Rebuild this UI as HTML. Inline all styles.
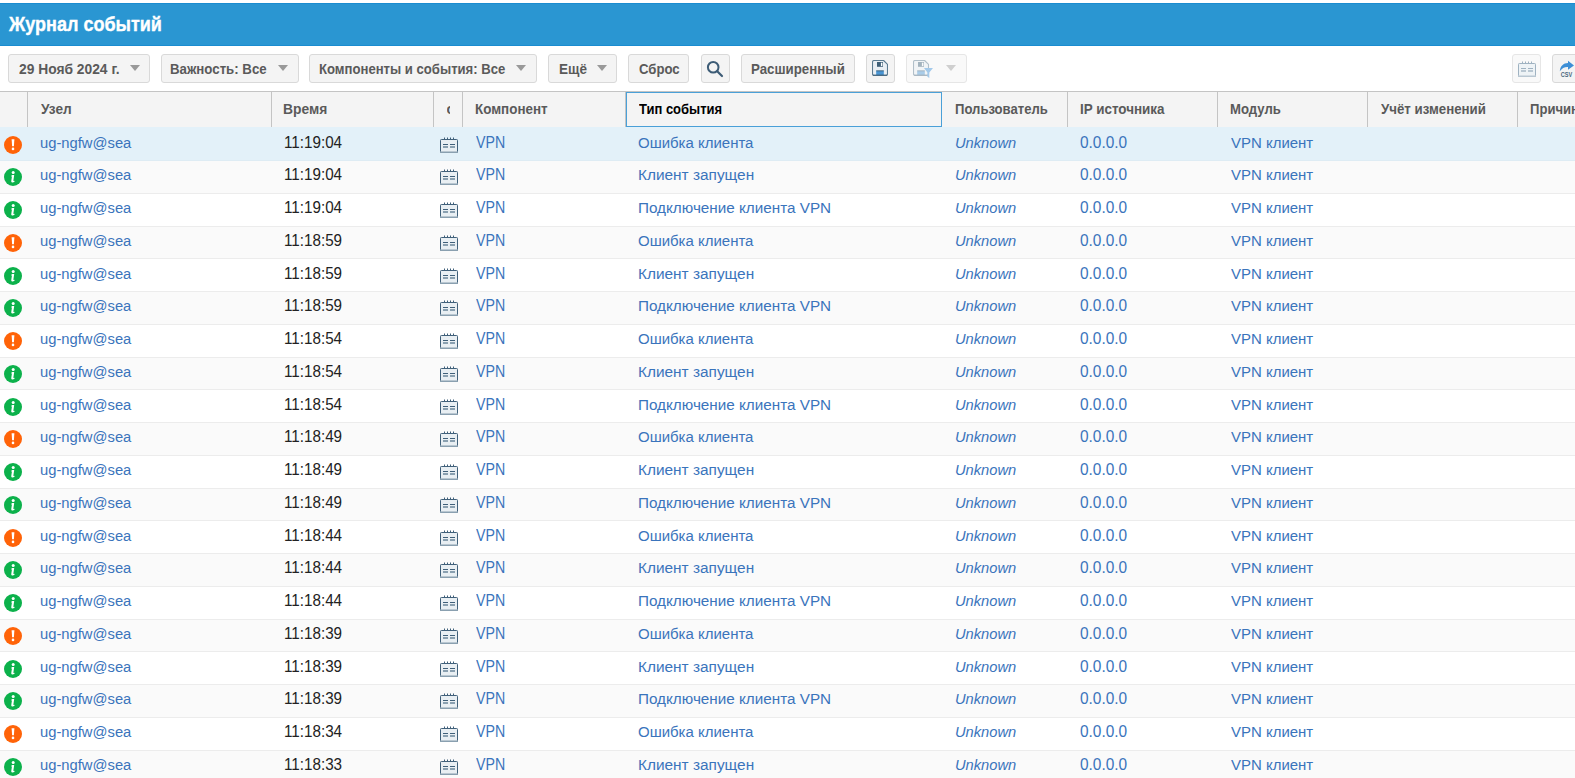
<!DOCTYPE html>
<html><head><meta charset="utf-8"><title>Журнал событий</title><style>
*{box-sizing:border-box;margin:0;padding:0}
html,body{width:1575px;height:778px;overflow:hidden;background:#fff;font-family:"Liberation Sans", sans-serif;position:relative}
.a{position:absolute;white-space:nowrap}
.btn{position:absolute;top:54px;height:29px;border:1px solid #d9d9d9;border-radius:3px;background:#f4f4f4}
.btn.dis{background:#f9f9f9;border-color:#e6e6e6}
.bt{position:absolute;font-weight:bold;font-size:14px;color:#5a5a5a;line-height:15px;top:61.7px;white-space:nowrap;transform-origin:0 0}
.car{position:absolute;width:0;height:0;border-left:5px solid transparent;border-right:5px solid transparent;border-top:6px solid #999;top:65px}
.hd{position:absolute;font-weight:bold;font-size:14px;color:#5a5a5a;line-height:15px;top:101.7px;white-space:nowrap;transform-origin:0 0}
.sep{position:absolute;top:92px;width:1px;height:35px;background:#c4c4c4}
.row{position:absolute;left:0;width:1575px}
.t{position:absolute;font-size:16px;line-height:17px;white-space:nowrap;color:#3a74bc;transform-origin:0 0}
.tm{color:#222}
.it{font-style:italic}
.ic{position:absolute;left:4px;width:18px;height:18px;border-radius:50%}
.cal{position:absolute;left:440px}
</style></head>
<body>
<div class="a" style="left:0;top:3px;width:1575px;height:43px;background:#2a96d2;border-top:1px solid #1a8cd0;border-bottom:1px solid #1a8cd0"></div>
<div class="a" style="left:9px;top:14px;font-size:19.5px;line-height:21px;font-weight:bold;color:#fff;-webkit-text-stroke:0.35px #fff;transform:scaleX(0.9238);transform-origin:0 0">Журнал событий</div>
<div class="btn" style="left:8px;width:142px"></div>
<div class="bt" style="left:19px;transform:scaleX(0.9861)">29 Нояб 2024 г.</div>
<div class="car" style="left:130px"></div>
<div class="btn" style="left:161px;width:138px"></div>
<div class="bt" style="left:170.4px;transform:scaleX(0.9465)">Важность: Все</div>
<div class="car" style="left:278px"></div>
<div class="btn" style="left:309px;width:228px"></div>
<div class="bt" style="left:319.4px;transform:scaleX(0.9364)">Компоненты и события: Все</div>
<div class="car" style="left:516px"></div>
<div class="btn" style="left:548px;width:69px"></div>
<div class="bt" style="left:559px;transform:scaleX(0.9643)">Ещё</div>
<div class="car" style="left:597px"></div>
<div class="btn" style="left:628px;width:61px"></div>
<div class="bt" style="left:638.5px;transform:scaleX(0.9381)">Сброс</div>
<div class="btn" style="left:741px;width:114px"></div>
<div class="bt" style="left:750.6px;transform:scaleX(0.9495)">Расширенный</div>
<div class="btn" style="left:701px;width:29px"></div>
<svg class="a" style="left:701px;top:54px" width="29" height="29" viewBox="0 0 29 29"><circle cx="12.2" cy="13.2" r="5.3" fill="none" stroke="#3d5c76" stroke-width="2"/><line x1="16.2" y1="17.2" x2="21" y2="22" stroke="#3d5c76" stroke-width="2.2" stroke-linecap="round"/></svg>
<div class="btn" style="left:866px;width:29px"></div>
<svg class="a" style="left:872px;top:60px" width="16" height="16" viewBox="0 0 16 16"><g opacity="1"><path d="M2 0.5 H11.6 L15.5 4.4 V14 Q15.5 15.5 14 15.5 H2 Q0.5 15.5 0.5 14 V2 Q0.5 0.5 2 0.5 Z" fill="#e9eff4" stroke="#5b7b91" stroke-width="1.1" stroke-linejoin="round"/><rect x="5" y="2" width="6" height="4.8" fill="#3d5f78"/><rect x="8.9" y="2.7" width="1.5" height="3.4" fill="#fff"/><rect x="4.2" y="10.8" width="7.6" height="4.3" fill="#4a96d4"/><rect x="4.2" y="10.4" width="7.6" height="0.9" fill="#3d5f78"/><rect x="1" y="14.6" width="14" height="1" fill="#3f6079"/></g></svg>
<div class="btn dis" style="left:906px;width:61px"></div>
<svg class="a" style="left:913px;top:60px" width="22" height="20" viewBox="0 0 22 20"><g opacity="0.45"><path d="M2 0.5 H11.6 L15.5 4.4 V14 Q15.5 15.5 14 15.5 H2 Q0.5 15.5 0.5 14 V2 Q0.5 0.5 2 0.5 Z" fill="#e9eff4" stroke="#5b7b91" stroke-width="1.1" stroke-linejoin="round"/><rect x="5" y="2" width="6" height="4.8" fill="#3d5f78"/><rect x="8.9" y="2.7" width="1.5" height="3.4" fill="#fff"/><rect x="4.2" y="10.8" width="7.6" height="4.3" fill="#4a96d4"/><rect x="4.2" y="10.4" width="7.6" height="0.9" fill="#3d5f78"/><rect x="1" y="14.6" width="14" height="1" fill="#3f6079"/></g><path d="M11 8 H20 L16.3 12.6 V18 L14.4 16.8 V12.6 Z" fill="#a3c9ea"/></svg>
<div class="car" style="left:946px;border-top-color:#cfcfcf"></div>
<div class="btn dis" style="left:1512px;width:29px"></div>
<svg class="a" style="left:1518px;top:61px" width="18" height="16" viewBox="0 0 18 16" opacity="1"><rect x="0.5" y="2.5" width="17" height="13" rx="0.8" fill="#eef3f6" stroke="#9fb2c1" stroke-width="1"/><rect x="0" y="14.5" width="18" height="1.5" fill="#b9c7d2"/><rect x="4" y="0.5" width="1" height="2" fill="#9fb2c1"/><rect x="7" y="0.5" width="1" height="2" fill="#9fb2c1"/><rect x="10" y="0.5" width="1" height="2" fill="#9fb2c1"/><rect x="13" y="0.5" width="1" height="2" fill="#9fb2c1"/><rect x="3" y="7" width="5" height="1" fill="#9fb2c1"/><rect x="10" y="7" width="5" height="1" fill="#9fb2c1"/><rect x="3" y="9" width="5" height="2" fill="#b9c7d2"/><rect x="10" y="9" width="5" height="2" fill="#b9c7d2"/></svg>
<div class="btn" style="left:1552px;width:40px"></div>
<svg class="a" style="left:1552px;top:54px" width="23" height="29" viewBox="0 0 23 29"><path d="M7.8 17.3 C8.2 12 11.5 9 16 9 V6.8 L22 11.4 L16 15.8 V13 C12.5 12.8 10 14.2 7.8 17.3 Z" fill="#3d8fd6"/><text x="0" y="0" transform="translate(8.8 22.9) scale(0.82 1)" font-family="Liberation Sans" font-weight="bold" font-size="6.8" fill="#4a687e">CSV</text></svg>
<div class="a" style="left:0;top:91px;width:1575px;height:36px;background:#f4f4f4;border-top:1px solid #c4c4c4"></div>
<div class="sep" style="left:27px"></div>
<div class="sep" style="left:271px"></div>
<div class="sep" style="left:433px"></div>
<div class="sep" style="left:462px"></div>
<div class="sep" style="left:625px"></div>
<div class="sep" style="left:941px"></div>
<div class="sep" style="left:1067px"></div>
<div class="sep" style="left:1217px"></div>
<div class="sep" style="left:1367px"></div>
<div class="sep" style="left:1517px"></div>
<div class="a" style="left:626px;top:92px;width:316px;height:35px;border:1px solid #4aa0d8"></div>
<div class="hd" style="left:41px;transform:scaleX(0.9742)">Узел</div>
<div class="hd" style="left:283.2px;transform:scaleX(0.9884)">Время</div>
<div class="a" style="left:447px;top:92px;width:3.4px;height:30px;overflow:hidden"><div class="hd" style="left:-0.6px;top:9.7px">о</div></div>
<div class="hd" style="left:475.3px;transform:scaleX(0.9573)">Компонент</div>
<div class="hd" style="left:639px;transform:scaleX(0.9281);color:#000">Тип события</div>
<div class="hd" style="left:955.3px;transform:scaleX(0.9347)">Пользователь</div>
<div class="hd" style="left:1080.3px;transform:scaleX(0.9586)">IP источника</div>
<div class="hd" style="left:1230.3px;transform:scaleX(0.9377)">Модуль</div>
<div class="hd" style="left:1381px;transform:scaleX(0.9482)">Учёт изменений</div>
<div class="hd" style="left:1530.3px;transform:scaleX(0.9347)">Причина</div>
<div class="row" style="top:127px;height:34px;background:#e3f1f9;border-bottom:1px solid #deecf4"></div>
<svg class="a" style="left:4px;top:136px" width="18" height="18" viewBox="0 0 18 18"><circle cx="9" cy="9" r="9" fill="#ff6308"/><path d="M7.6 3.2 H10.4 L9.9 10.2 H8.1 Z" fill="#fff"/><circle cx="9" cy="12.9" r="1.3" fill="#fff"/></svg>
<div class="t" style="left:40px;top:134px;font-size:15.5px;transform:scaleX(0.9526)">ug-ngfw@sea</div>
<div class="t tm" style="left:284.3px;top:134px;transform:scaleX(0.95)">11:19:04</div>
<svg class="a" style="left:440px;top:137px" width="18" height="16" viewBox="0 0 18 16" opacity="1"><rect x="0.5" y="2.5" width="17" height="13" rx="0.8" fill="#e9eff3" stroke="#40607a" stroke-width="1"/><rect x="0" y="14.5" width="18" height="1.5" fill="#8aa0b0"/><rect x="4" y="0.5" width="1" height="2" fill="#40607a"/><rect x="7" y="0.5" width="1" height="2" fill="#40607a"/><rect x="10" y="0.5" width="1" height="2" fill="#40607a"/><rect x="13" y="0.5" width="1" height="2" fill="#40607a"/><rect x="3" y="7" width="5" height="1" fill="#40607a"/><rect x="10" y="7" width="5" height="1" fill="#40607a"/><rect x="3" y="9" width="5" height="2" fill="#8aa0b0"/><rect x="10" y="9" width="5" height="2" fill="#8aa0b0"/></svg>
<div class="t" style="left:475.7px;top:134px;transform:scaleX(0.8875)">VPN</div>
<div class="t" style="left:638px;top:134px;font-size:15.5px;transform:scaleX(0.9664)">Ошибка клиента</div>
<div class="t it" style="left:955px;top:134px;font-size:15.5px;transform:scaleX(0.9476)">Unknown</div>
<div class="t" style="left:1080px;top:134px;transform:scaleX(0.9638)">0.0.0.0</div>
<div class="t" style="left:1231px;top:134px;font-size:15.5px;transform:scaleX(0.9659)">VPN клиент</div>
<div class="row" style="top:161px;height:33px;background:#fafafa;border-bottom:1px solid #ececec"></div>
<svg class="a" style="left:4px;top:168px" width="18" height="18" viewBox="0 0 18 18"><circle cx="9" cy="9" r="9" fill="#0cb14b"/><circle cx="9.2" cy="4.4" r="1.5" fill="#fff"/><path d="M7.7 7 H10.2 L9.4 12.6 C9.3 13.2 9.8 13.3 10.6 12.7 L10.8 13.3 C9.8 14.3 8.6 14.7 7.9 14.4 C7.3 14.1 7.2 13.5 7.3 12.8 L7.9 8.7 H7.4 Z" fill="#fff"/></svg>
<div class="t" style="left:40px;top:166px;font-size:15.5px;transform:scaleX(0.9526)">ug-ngfw@sea</div>
<div class="t tm" style="left:284.3px;top:166px;transform:scaleX(0.95)">11:19:04</div>
<svg class="a" style="left:440px;top:169px" width="18" height="16" viewBox="0 0 18 16" opacity="1"><rect x="0.5" y="2.5" width="17" height="13" rx="0.8" fill="#e9eff3" stroke="#40607a" stroke-width="1"/><rect x="0" y="14.5" width="18" height="1.5" fill="#8aa0b0"/><rect x="4" y="0.5" width="1" height="2" fill="#40607a"/><rect x="7" y="0.5" width="1" height="2" fill="#40607a"/><rect x="10" y="0.5" width="1" height="2" fill="#40607a"/><rect x="13" y="0.5" width="1" height="2" fill="#40607a"/><rect x="3" y="7" width="5" height="1" fill="#40607a"/><rect x="10" y="7" width="5" height="1" fill="#40607a"/><rect x="3" y="9" width="5" height="2" fill="#8aa0b0"/><rect x="10" y="9" width="5" height="2" fill="#8aa0b0"/></svg>
<div class="t" style="left:475.7px;top:166px;transform:scaleX(0.8875)">VPN</div>
<div class="t" style="left:638px;top:166px;font-size:15.5px;transform:scaleX(0.993)">Клиент запущен</div>
<div class="t it" style="left:955px;top:166px;font-size:15.5px;transform:scaleX(0.9476)">Unknown</div>
<div class="t" style="left:1080px;top:166px;transform:scaleX(0.9638)">0.0.0.0</div>
<div class="t" style="left:1231px;top:166px;font-size:15.5px;transform:scaleX(0.9659)">VPN клиент</div>
<div class="row" style="top:194px;height:33px;background:#ffffff;border-bottom:1px solid #ececec"></div>
<svg class="a" style="left:4px;top:201px" width="18" height="18" viewBox="0 0 18 18"><circle cx="9" cy="9" r="9" fill="#0cb14b"/><circle cx="9.2" cy="4.4" r="1.5" fill="#fff"/><path d="M7.7 7 H10.2 L9.4 12.6 C9.3 13.2 9.8 13.3 10.6 12.7 L10.8 13.3 C9.8 14.3 8.6 14.7 7.9 14.4 C7.3 14.1 7.2 13.5 7.3 12.8 L7.9 8.7 H7.4 Z" fill="#fff"/></svg>
<div class="t" style="left:40px;top:199px;font-size:15.5px;transform:scaleX(0.9526)">ug-ngfw@sea</div>
<div class="t tm" style="left:284.3px;top:199px;transform:scaleX(0.95)">11:19:04</div>
<svg class="a" style="left:440px;top:202px" width="18" height="16" viewBox="0 0 18 16" opacity="1"><rect x="0.5" y="2.5" width="17" height="13" rx="0.8" fill="#e9eff3" stroke="#40607a" stroke-width="1"/><rect x="0" y="14.5" width="18" height="1.5" fill="#8aa0b0"/><rect x="4" y="0.5" width="1" height="2" fill="#40607a"/><rect x="7" y="0.5" width="1" height="2" fill="#40607a"/><rect x="10" y="0.5" width="1" height="2" fill="#40607a"/><rect x="13" y="0.5" width="1" height="2" fill="#40607a"/><rect x="3" y="7" width="5" height="1" fill="#40607a"/><rect x="10" y="7" width="5" height="1" fill="#40607a"/><rect x="3" y="9" width="5" height="2" fill="#8aa0b0"/><rect x="10" y="9" width="5" height="2" fill="#8aa0b0"/></svg>
<div class="t" style="left:475.7px;top:199px;transform:scaleX(0.8875)">VPN</div>
<div class="t" style="left:638px;top:199px;font-size:15.5px;transform:scaleX(0.9845)">Подключение клиента VPN</div>
<div class="t it" style="left:955px;top:199px;font-size:15.5px;transform:scaleX(0.9476)">Unknown</div>
<div class="t" style="left:1080px;top:199px;transform:scaleX(0.9638)">0.0.0.0</div>
<div class="t" style="left:1231px;top:199px;font-size:15.5px;transform:scaleX(0.9659)">VPN клиент</div>
<div class="row" style="top:227px;height:32px;background:#fafafa;border-bottom:1px solid #ececec"></div>
<svg class="a" style="left:4px;top:234px" width="18" height="18" viewBox="0 0 18 18"><circle cx="9" cy="9" r="9" fill="#ff6308"/><path d="M7.6 3.2 H10.4 L9.9 10.2 H8.1 Z" fill="#fff"/><circle cx="9" cy="12.9" r="1.3" fill="#fff"/></svg>
<div class="t" style="left:40px;top:232px;font-size:15.5px;transform:scaleX(0.9526)">ug-ngfw@sea</div>
<div class="t tm" style="left:284.3px;top:232px;transform:scaleX(0.95)">11:18:59</div>
<svg class="a" style="left:440px;top:235px" width="18" height="16" viewBox="0 0 18 16" opacity="1"><rect x="0.5" y="2.5" width="17" height="13" rx="0.8" fill="#e9eff3" stroke="#40607a" stroke-width="1"/><rect x="0" y="14.5" width="18" height="1.5" fill="#8aa0b0"/><rect x="4" y="0.5" width="1" height="2" fill="#40607a"/><rect x="7" y="0.5" width="1" height="2" fill="#40607a"/><rect x="10" y="0.5" width="1" height="2" fill="#40607a"/><rect x="13" y="0.5" width="1" height="2" fill="#40607a"/><rect x="3" y="7" width="5" height="1" fill="#40607a"/><rect x="10" y="7" width="5" height="1" fill="#40607a"/><rect x="3" y="9" width="5" height="2" fill="#8aa0b0"/><rect x="10" y="9" width="5" height="2" fill="#8aa0b0"/></svg>
<div class="t" style="left:475.7px;top:232px;transform:scaleX(0.8875)">VPN</div>
<div class="t" style="left:638px;top:232px;font-size:15.5px;transform:scaleX(0.9664)">Ошибка клиента</div>
<div class="t it" style="left:955px;top:232px;font-size:15.5px;transform:scaleX(0.9476)">Unknown</div>
<div class="t" style="left:1080px;top:232px;transform:scaleX(0.9638)">0.0.0.0</div>
<div class="t" style="left:1231px;top:232px;font-size:15.5px;transform:scaleX(0.9659)">VPN клиент</div>
<div class="row" style="top:259px;height:33px;background:#ffffff;border-bottom:1px solid #ececec"></div>
<svg class="a" style="left:4px;top:267px" width="18" height="18" viewBox="0 0 18 18"><circle cx="9" cy="9" r="9" fill="#0cb14b"/><circle cx="9.2" cy="4.4" r="1.5" fill="#fff"/><path d="M7.7 7 H10.2 L9.4 12.6 C9.3 13.2 9.8 13.3 10.6 12.7 L10.8 13.3 C9.8 14.3 8.6 14.7 7.9 14.4 C7.3 14.1 7.2 13.5 7.3 12.8 L7.9 8.7 H7.4 Z" fill="#fff"/></svg>
<div class="t" style="left:40px;top:265px;font-size:15.5px;transform:scaleX(0.9526)">ug-ngfw@sea</div>
<div class="t tm" style="left:284.3px;top:265px;transform:scaleX(0.95)">11:18:59</div>
<svg class="a" style="left:440px;top:268px" width="18" height="16" viewBox="0 0 18 16" opacity="1"><rect x="0.5" y="2.5" width="17" height="13" rx="0.8" fill="#e9eff3" stroke="#40607a" stroke-width="1"/><rect x="0" y="14.5" width="18" height="1.5" fill="#8aa0b0"/><rect x="4" y="0.5" width="1" height="2" fill="#40607a"/><rect x="7" y="0.5" width="1" height="2" fill="#40607a"/><rect x="10" y="0.5" width="1" height="2" fill="#40607a"/><rect x="13" y="0.5" width="1" height="2" fill="#40607a"/><rect x="3" y="7" width="5" height="1" fill="#40607a"/><rect x="10" y="7" width="5" height="1" fill="#40607a"/><rect x="3" y="9" width="5" height="2" fill="#8aa0b0"/><rect x="10" y="9" width="5" height="2" fill="#8aa0b0"/></svg>
<div class="t" style="left:475.7px;top:265px;transform:scaleX(0.8875)">VPN</div>
<div class="t" style="left:638px;top:265px;font-size:15.5px;transform:scaleX(0.993)">Клиент запущен</div>
<div class="t it" style="left:955px;top:265px;font-size:15.5px;transform:scaleX(0.9476)">Unknown</div>
<div class="t" style="left:1080px;top:265px;transform:scaleX(0.9638)">0.0.0.0</div>
<div class="t" style="left:1231px;top:265px;font-size:15.5px;transform:scaleX(0.9659)">VPN клиент</div>
<div class="row" style="top:292px;height:33px;background:#fafafa;border-bottom:1px solid #ececec"></div>
<svg class="a" style="left:4px;top:299px" width="18" height="18" viewBox="0 0 18 18"><circle cx="9" cy="9" r="9" fill="#0cb14b"/><circle cx="9.2" cy="4.4" r="1.5" fill="#fff"/><path d="M7.7 7 H10.2 L9.4 12.6 C9.3 13.2 9.8 13.3 10.6 12.7 L10.8 13.3 C9.8 14.3 8.6 14.7 7.9 14.4 C7.3 14.1 7.2 13.5 7.3 12.8 L7.9 8.7 H7.4 Z" fill="#fff"/></svg>
<div class="t" style="left:40px;top:297px;font-size:15.5px;transform:scaleX(0.9526)">ug-ngfw@sea</div>
<div class="t tm" style="left:284.3px;top:297px;transform:scaleX(0.95)">11:18:59</div>
<svg class="a" style="left:440px;top:300px" width="18" height="16" viewBox="0 0 18 16" opacity="1"><rect x="0.5" y="2.5" width="17" height="13" rx="0.8" fill="#e9eff3" stroke="#40607a" stroke-width="1"/><rect x="0" y="14.5" width="18" height="1.5" fill="#8aa0b0"/><rect x="4" y="0.5" width="1" height="2" fill="#40607a"/><rect x="7" y="0.5" width="1" height="2" fill="#40607a"/><rect x="10" y="0.5" width="1" height="2" fill="#40607a"/><rect x="13" y="0.5" width="1" height="2" fill="#40607a"/><rect x="3" y="7" width="5" height="1" fill="#40607a"/><rect x="10" y="7" width="5" height="1" fill="#40607a"/><rect x="3" y="9" width="5" height="2" fill="#8aa0b0"/><rect x="10" y="9" width="5" height="2" fill="#8aa0b0"/></svg>
<div class="t" style="left:475.7px;top:297px;transform:scaleX(0.8875)">VPN</div>
<div class="t" style="left:638px;top:297px;font-size:15.5px;transform:scaleX(0.9845)">Подключение клиента VPN</div>
<div class="t it" style="left:955px;top:297px;font-size:15.5px;transform:scaleX(0.9476)">Unknown</div>
<div class="t" style="left:1080px;top:297px;transform:scaleX(0.9638)">0.0.0.0</div>
<div class="t" style="left:1231px;top:297px;font-size:15.5px;transform:scaleX(0.9659)">VPN клиент</div>
<div class="row" style="top:325px;height:33px;background:#ffffff;border-bottom:1px solid #ececec"></div>
<svg class="a" style="left:4px;top:332px" width="18" height="18" viewBox="0 0 18 18"><circle cx="9" cy="9" r="9" fill="#ff6308"/><path d="M7.6 3.2 H10.4 L9.9 10.2 H8.1 Z" fill="#fff"/><circle cx="9" cy="12.9" r="1.3" fill="#fff"/></svg>
<div class="t" style="left:40px;top:330px;font-size:15.5px;transform:scaleX(0.9526)">ug-ngfw@sea</div>
<div class="t tm" style="left:284.3px;top:330px;transform:scaleX(0.95)">11:18:54</div>
<svg class="a" style="left:440px;top:333px" width="18" height="16" viewBox="0 0 18 16" opacity="1"><rect x="0.5" y="2.5" width="17" height="13" rx="0.8" fill="#e9eff3" stroke="#40607a" stroke-width="1"/><rect x="0" y="14.5" width="18" height="1.5" fill="#8aa0b0"/><rect x="4" y="0.5" width="1" height="2" fill="#40607a"/><rect x="7" y="0.5" width="1" height="2" fill="#40607a"/><rect x="10" y="0.5" width="1" height="2" fill="#40607a"/><rect x="13" y="0.5" width="1" height="2" fill="#40607a"/><rect x="3" y="7" width="5" height="1" fill="#40607a"/><rect x="10" y="7" width="5" height="1" fill="#40607a"/><rect x="3" y="9" width="5" height="2" fill="#8aa0b0"/><rect x="10" y="9" width="5" height="2" fill="#8aa0b0"/></svg>
<div class="t" style="left:475.7px;top:330px;transform:scaleX(0.8875)">VPN</div>
<div class="t" style="left:638px;top:330px;font-size:15.5px;transform:scaleX(0.9664)">Ошибка клиента</div>
<div class="t it" style="left:955px;top:330px;font-size:15.5px;transform:scaleX(0.9476)">Unknown</div>
<div class="t" style="left:1080px;top:330px;transform:scaleX(0.9638)">0.0.0.0</div>
<div class="t" style="left:1231px;top:330px;font-size:15.5px;transform:scaleX(0.9659)">VPN клиент</div>
<div class="row" style="top:358px;height:32px;background:#fafafa;border-bottom:1px solid #ececec"></div>
<svg class="a" style="left:4px;top:365px" width="18" height="18" viewBox="0 0 18 18"><circle cx="9" cy="9" r="9" fill="#0cb14b"/><circle cx="9.2" cy="4.4" r="1.5" fill="#fff"/><path d="M7.7 7 H10.2 L9.4 12.6 C9.3 13.2 9.8 13.3 10.6 12.7 L10.8 13.3 C9.8 14.3 8.6 14.7 7.9 14.4 C7.3 14.1 7.2 13.5 7.3 12.8 L7.9 8.7 H7.4 Z" fill="#fff"/></svg>
<div class="t" style="left:40px;top:363px;font-size:15.5px;transform:scaleX(0.9526)">ug-ngfw@sea</div>
<div class="t tm" style="left:284.3px;top:363px;transform:scaleX(0.95)">11:18:54</div>
<svg class="a" style="left:440px;top:366px" width="18" height="16" viewBox="0 0 18 16" opacity="1"><rect x="0.5" y="2.5" width="17" height="13" rx="0.8" fill="#e9eff3" stroke="#40607a" stroke-width="1"/><rect x="0" y="14.5" width="18" height="1.5" fill="#8aa0b0"/><rect x="4" y="0.5" width="1" height="2" fill="#40607a"/><rect x="7" y="0.5" width="1" height="2" fill="#40607a"/><rect x="10" y="0.5" width="1" height="2" fill="#40607a"/><rect x="13" y="0.5" width="1" height="2" fill="#40607a"/><rect x="3" y="7" width="5" height="1" fill="#40607a"/><rect x="10" y="7" width="5" height="1" fill="#40607a"/><rect x="3" y="9" width="5" height="2" fill="#8aa0b0"/><rect x="10" y="9" width="5" height="2" fill="#8aa0b0"/></svg>
<div class="t" style="left:475.7px;top:363px;transform:scaleX(0.8875)">VPN</div>
<div class="t" style="left:638px;top:363px;font-size:15.5px;transform:scaleX(0.993)">Клиент запущен</div>
<div class="t it" style="left:955px;top:363px;font-size:15.5px;transform:scaleX(0.9476)">Unknown</div>
<div class="t" style="left:1080px;top:363px;transform:scaleX(0.9638)">0.0.0.0</div>
<div class="t" style="left:1231px;top:363px;font-size:15.5px;transform:scaleX(0.9659)">VPN клиент</div>
<div class="row" style="top:390px;height:33px;background:#ffffff;border-bottom:1px solid #ececec"></div>
<svg class="a" style="left:4px;top:398px" width="18" height="18" viewBox="0 0 18 18"><circle cx="9" cy="9" r="9" fill="#0cb14b"/><circle cx="9.2" cy="4.4" r="1.5" fill="#fff"/><path d="M7.7 7 H10.2 L9.4 12.6 C9.3 13.2 9.8 13.3 10.6 12.7 L10.8 13.3 C9.8 14.3 8.6 14.7 7.9 14.4 C7.3 14.1 7.2 13.5 7.3 12.8 L7.9 8.7 H7.4 Z" fill="#fff"/></svg>
<div class="t" style="left:40px;top:396px;font-size:15.5px;transform:scaleX(0.9526)">ug-ngfw@sea</div>
<div class="t tm" style="left:284.3px;top:396px;transform:scaleX(0.95)">11:18:54</div>
<svg class="a" style="left:440px;top:399px" width="18" height="16" viewBox="0 0 18 16" opacity="1"><rect x="0.5" y="2.5" width="17" height="13" rx="0.8" fill="#e9eff3" stroke="#40607a" stroke-width="1"/><rect x="0" y="14.5" width="18" height="1.5" fill="#8aa0b0"/><rect x="4" y="0.5" width="1" height="2" fill="#40607a"/><rect x="7" y="0.5" width="1" height="2" fill="#40607a"/><rect x="10" y="0.5" width="1" height="2" fill="#40607a"/><rect x="13" y="0.5" width="1" height="2" fill="#40607a"/><rect x="3" y="7" width="5" height="1" fill="#40607a"/><rect x="10" y="7" width="5" height="1" fill="#40607a"/><rect x="3" y="9" width="5" height="2" fill="#8aa0b0"/><rect x="10" y="9" width="5" height="2" fill="#8aa0b0"/></svg>
<div class="t" style="left:475.7px;top:396px;transform:scaleX(0.8875)">VPN</div>
<div class="t" style="left:638px;top:396px;font-size:15.5px;transform:scaleX(0.9845)">Подключение клиента VPN</div>
<div class="t it" style="left:955px;top:396px;font-size:15.5px;transform:scaleX(0.9476)">Unknown</div>
<div class="t" style="left:1080px;top:396px;transform:scaleX(0.9638)">0.0.0.0</div>
<div class="t" style="left:1231px;top:396px;font-size:15.5px;transform:scaleX(0.9659)">VPN клиент</div>
<div class="row" style="top:423px;height:33px;background:#fafafa;border-bottom:1px solid #ececec"></div>
<svg class="a" style="left:4px;top:430px" width="18" height="18" viewBox="0 0 18 18"><circle cx="9" cy="9" r="9" fill="#ff6308"/><path d="M7.6 3.2 H10.4 L9.9 10.2 H8.1 Z" fill="#fff"/><circle cx="9" cy="12.9" r="1.3" fill="#fff"/></svg>
<div class="t" style="left:40px;top:428px;font-size:15.5px;transform:scaleX(0.9526)">ug-ngfw@sea</div>
<div class="t tm" style="left:284.3px;top:428px;transform:scaleX(0.95)">11:18:49</div>
<svg class="a" style="left:440px;top:431px" width="18" height="16" viewBox="0 0 18 16" opacity="1"><rect x="0.5" y="2.5" width="17" height="13" rx="0.8" fill="#e9eff3" stroke="#40607a" stroke-width="1"/><rect x="0" y="14.5" width="18" height="1.5" fill="#8aa0b0"/><rect x="4" y="0.5" width="1" height="2" fill="#40607a"/><rect x="7" y="0.5" width="1" height="2" fill="#40607a"/><rect x="10" y="0.5" width="1" height="2" fill="#40607a"/><rect x="13" y="0.5" width="1" height="2" fill="#40607a"/><rect x="3" y="7" width="5" height="1" fill="#40607a"/><rect x="10" y="7" width="5" height="1" fill="#40607a"/><rect x="3" y="9" width="5" height="2" fill="#8aa0b0"/><rect x="10" y="9" width="5" height="2" fill="#8aa0b0"/></svg>
<div class="t" style="left:475.7px;top:428px;transform:scaleX(0.8875)">VPN</div>
<div class="t" style="left:638px;top:428px;font-size:15.5px;transform:scaleX(0.9664)">Ошибка клиента</div>
<div class="t it" style="left:955px;top:428px;font-size:15.5px;transform:scaleX(0.9476)">Unknown</div>
<div class="t" style="left:1080px;top:428px;transform:scaleX(0.9638)">0.0.0.0</div>
<div class="t" style="left:1231px;top:428px;font-size:15.5px;transform:scaleX(0.9659)">VPN клиент</div>
<div class="row" style="top:456px;height:33px;background:#ffffff;border-bottom:1px solid #ececec"></div>
<svg class="a" style="left:4px;top:463px" width="18" height="18" viewBox="0 0 18 18"><circle cx="9" cy="9" r="9" fill="#0cb14b"/><circle cx="9.2" cy="4.4" r="1.5" fill="#fff"/><path d="M7.7 7 H10.2 L9.4 12.6 C9.3 13.2 9.8 13.3 10.6 12.7 L10.8 13.3 C9.8 14.3 8.6 14.7 7.9 14.4 C7.3 14.1 7.2 13.5 7.3 12.8 L7.9 8.7 H7.4 Z" fill="#fff"/></svg>
<div class="t" style="left:40px;top:461px;font-size:15.5px;transform:scaleX(0.9526)">ug-ngfw@sea</div>
<div class="t tm" style="left:284.3px;top:461px;transform:scaleX(0.95)">11:18:49</div>
<svg class="a" style="left:440px;top:464px" width="18" height="16" viewBox="0 0 18 16" opacity="1"><rect x="0.5" y="2.5" width="17" height="13" rx="0.8" fill="#e9eff3" stroke="#40607a" stroke-width="1"/><rect x="0" y="14.5" width="18" height="1.5" fill="#8aa0b0"/><rect x="4" y="0.5" width="1" height="2" fill="#40607a"/><rect x="7" y="0.5" width="1" height="2" fill="#40607a"/><rect x="10" y="0.5" width="1" height="2" fill="#40607a"/><rect x="13" y="0.5" width="1" height="2" fill="#40607a"/><rect x="3" y="7" width="5" height="1" fill="#40607a"/><rect x="10" y="7" width="5" height="1" fill="#40607a"/><rect x="3" y="9" width="5" height="2" fill="#8aa0b0"/><rect x="10" y="9" width="5" height="2" fill="#8aa0b0"/></svg>
<div class="t" style="left:475.7px;top:461px;transform:scaleX(0.8875)">VPN</div>
<div class="t" style="left:638px;top:461px;font-size:15.5px;transform:scaleX(0.993)">Клиент запущен</div>
<div class="t it" style="left:955px;top:461px;font-size:15.5px;transform:scaleX(0.9476)">Unknown</div>
<div class="t" style="left:1080px;top:461px;transform:scaleX(0.9638)">0.0.0.0</div>
<div class="t" style="left:1231px;top:461px;font-size:15.5px;transform:scaleX(0.9659)">VPN клиент</div>
<div class="row" style="top:489px;height:32px;background:#fafafa;border-bottom:1px solid #ececec"></div>
<svg class="a" style="left:4px;top:496px" width="18" height="18" viewBox="0 0 18 18"><circle cx="9" cy="9" r="9" fill="#0cb14b"/><circle cx="9.2" cy="4.4" r="1.5" fill="#fff"/><path d="M7.7 7 H10.2 L9.4 12.6 C9.3 13.2 9.8 13.3 10.6 12.7 L10.8 13.3 C9.8 14.3 8.6 14.7 7.9 14.4 C7.3 14.1 7.2 13.5 7.3 12.8 L7.9 8.7 H7.4 Z" fill="#fff"/></svg>
<div class="t" style="left:40px;top:494px;font-size:15.5px;transform:scaleX(0.9526)">ug-ngfw@sea</div>
<div class="t tm" style="left:284.3px;top:494px;transform:scaleX(0.95)">11:18:49</div>
<svg class="a" style="left:440px;top:497px" width="18" height="16" viewBox="0 0 18 16" opacity="1"><rect x="0.5" y="2.5" width="17" height="13" rx="0.8" fill="#e9eff3" stroke="#40607a" stroke-width="1"/><rect x="0" y="14.5" width="18" height="1.5" fill="#8aa0b0"/><rect x="4" y="0.5" width="1" height="2" fill="#40607a"/><rect x="7" y="0.5" width="1" height="2" fill="#40607a"/><rect x="10" y="0.5" width="1" height="2" fill="#40607a"/><rect x="13" y="0.5" width="1" height="2" fill="#40607a"/><rect x="3" y="7" width="5" height="1" fill="#40607a"/><rect x="10" y="7" width="5" height="1" fill="#40607a"/><rect x="3" y="9" width="5" height="2" fill="#8aa0b0"/><rect x="10" y="9" width="5" height="2" fill="#8aa0b0"/></svg>
<div class="t" style="left:475.7px;top:494px;transform:scaleX(0.8875)">VPN</div>
<div class="t" style="left:638px;top:494px;font-size:15.5px;transform:scaleX(0.9845)">Подключение клиента VPN</div>
<div class="t it" style="left:955px;top:494px;font-size:15.5px;transform:scaleX(0.9476)">Unknown</div>
<div class="t" style="left:1080px;top:494px;transform:scaleX(0.9638)">0.0.0.0</div>
<div class="t" style="left:1231px;top:494px;font-size:15.5px;transform:scaleX(0.9659)">VPN клиент</div>
<div class="row" style="top:521px;height:33px;background:#ffffff;border-bottom:1px solid #ececec"></div>
<svg class="a" style="left:4px;top:529px" width="18" height="18" viewBox="0 0 18 18"><circle cx="9" cy="9" r="9" fill="#ff6308"/><path d="M7.6 3.2 H10.4 L9.9 10.2 H8.1 Z" fill="#fff"/><circle cx="9" cy="12.9" r="1.3" fill="#fff"/></svg>
<div class="t" style="left:40px;top:527px;font-size:15.5px;transform:scaleX(0.9526)">ug-ngfw@sea</div>
<div class="t tm" style="left:284.3px;top:527px;transform:scaleX(0.95)">11:18:44</div>
<svg class="a" style="left:440px;top:530px" width="18" height="16" viewBox="0 0 18 16" opacity="1"><rect x="0.5" y="2.5" width="17" height="13" rx="0.8" fill="#e9eff3" stroke="#40607a" stroke-width="1"/><rect x="0" y="14.5" width="18" height="1.5" fill="#8aa0b0"/><rect x="4" y="0.5" width="1" height="2" fill="#40607a"/><rect x="7" y="0.5" width="1" height="2" fill="#40607a"/><rect x="10" y="0.5" width="1" height="2" fill="#40607a"/><rect x="13" y="0.5" width="1" height="2" fill="#40607a"/><rect x="3" y="7" width="5" height="1" fill="#40607a"/><rect x="10" y="7" width="5" height="1" fill="#40607a"/><rect x="3" y="9" width="5" height="2" fill="#8aa0b0"/><rect x="10" y="9" width="5" height="2" fill="#8aa0b0"/></svg>
<div class="t" style="left:475.7px;top:527px;transform:scaleX(0.8875)">VPN</div>
<div class="t" style="left:638px;top:527px;font-size:15.5px;transform:scaleX(0.9664)">Ошибка клиента</div>
<div class="t it" style="left:955px;top:527px;font-size:15.5px;transform:scaleX(0.9476)">Unknown</div>
<div class="t" style="left:1080px;top:527px;transform:scaleX(0.9638)">0.0.0.0</div>
<div class="t" style="left:1231px;top:527px;font-size:15.5px;transform:scaleX(0.9659)">VPN клиент</div>
<div class="row" style="top:554px;height:33px;background:#fafafa;border-bottom:1px solid #ececec"></div>
<svg class="a" style="left:4px;top:561px" width="18" height="18" viewBox="0 0 18 18"><circle cx="9" cy="9" r="9" fill="#0cb14b"/><circle cx="9.2" cy="4.4" r="1.5" fill="#fff"/><path d="M7.7 7 H10.2 L9.4 12.6 C9.3 13.2 9.8 13.3 10.6 12.7 L10.8 13.3 C9.8 14.3 8.6 14.7 7.9 14.4 C7.3 14.1 7.2 13.5 7.3 12.8 L7.9 8.7 H7.4 Z" fill="#fff"/></svg>
<div class="t" style="left:40px;top:559px;font-size:15.5px;transform:scaleX(0.9526)">ug-ngfw@sea</div>
<div class="t tm" style="left:284.3px;top:559px;transform:scaleX(0.95)">11:18:44</div>
<svg class="a" style="left:440px;top:562px" width="18" height="16" viewBox="0 0 18 16" opacity="1"><rect x="0.5" y="2.5" width="17" height="13" rx="0.8" fill="#e9eff3" stroke="#40607a" stroke-width="1"/><rect x="0" y="14.5" width="18" height="1.5" fill="#8aa0b0"/><rect x="4" y="0.5" width="1" height="2" fill="#40607a"/><rect x="7" y="0.5" width="1" height="2" fill="#40607a"/><rect x="10" y="0.5" width="1" height="2" fill="#40607a"/><rect x="13" y="0.5" width="1" height="2" fill="#40607a"/><rect x="3" y="7" width="5" height="1" fill="#40607a"/><rect x="10" y="7" width="5" height="1" fill="#40607a"/><rect x="3" y="9" width="5" height="2" fill="#8aa0b0"/><rect x="10" y="9" width="5" height="2" fill="#8aa0b0"/></svg>
<div class="t" style="left:475.7px;top:559px;transform:scaleX(0.8875)">VPN</div>
<div class="t" style="left:638px;top:559px;font-size:15.5px;transform:scaleX(0.993)">Клиент запущен</div>
<div class="t it" style="left:955px;top:559px;font-size:15.5px;transform:scaleX(0.9476)">Unknown</div>
<div class="t" style="left:1080px;top:559px;transform:scaleX(0.9638)">0.0.0.0</div>
<div class="t" style="left:1231px;top:559px;font-size:15.5px;transform:scaleX(0.9659)">VPN клиент</div>
<div class="row" style="top:587px;height:33px;background:#ffffff;border-bottom:1px solid #ececec"></div>
<svg class="a" style="left:4px;top:594px" width="18" height="18" viewBox="0 0 18 18"><circle cx="9" cy="9" r="9" fill="#0cb14b"/><circle cx="9.2" cy="4.4" r="1.5" fill="#fff"/><path d="M7.7 7 H10.2 L9.4 12.6 C9.3 13.2 9.8 13.3 10.6 12.7 L10.8 13.3 C9.8 14.3 8.6 14.7 7.9 14.4 C7.3 14.1 7.2 13.5 7.3 12.8 L7.9 8.7 H7.4 Z" fill="#fff"/></svg>
<div class="t" style="left:40px;top:592px;font-size:15.5px;transform:scaleX(0.9526)">ug-ngfw@sea</div>
<div class="t tm" style="left:284.3px;top:592px;transform:scaleX(0.95)">11:18:44</div>
<svg class="a" style="left:440px;top:595px" width="18" height="16" viewBox="0 0 18 16" opacity="1"><rect x="0.5" y="2.5" width="17" height="13" rx="0.8" fill="#e9eff3" stroke="#40607a" stroke-width="1"/><rect x="0" y="14.5" width="18" height="1.5" fill="#8aa0b0"/><rect x="4" y="0.5" width="1" height="2" fill="#40607a"/><rect x="7" y="0.5" width="1" height="2" fill="#40607a"/><rect x="10" y="0.5" width="1" height="2" fill="#40607a"/><rect x="13" y="0.5" width="1" height="2" fill="#40607a"/><rect x="3" y="7" width="5" height="1" fill="#40607a"/><rect x="10" y="7" width="5" height="1" fill="#40607a"/><rect x="3" y="9" width="5" height="2" fill="#8aa0b0"/><rect x="10" y="9" width="5" height="2" fill="#8aa0b0"/></svg>
<div class="t" style="left:475.7px;top:592px;transform:scaleX(0.8875)">VPN</div>
<div class="t" style="left:638px;top:592px;font-size:15.5px;transform:scaleX(0.9845)">Подключение клиента VPN</div>
<div class="t it" style="left:955px;top:592px;font-size:15.5px;transform:scaleX(0.9476)">Unknown</div>
<div class="t" style="left:1080px;top:592px;transform:scaleX(0.9638)">0.0.0.0</div>
<div class="t" style="left:1231px;top:592px;font-size:15.5px;transform:scaleX(0.9659)">VPN клиент</div>
<div class="row" style="top:620px;height:32px;background:#fafafa;border-bottom:1px solid #ececec"></div>
<svg class="a" style="left:4px;top:627px" width="18" height="18" viewBox="0 0 18 18"><circle cx="9" cy="9" r="9" fill="#ff6308"/><path d="M7.6 3.2 H10.4 L9.9 10.2 H8.1 Z" fill="#fff"/><circle cx="9" cy="12.9" r="1.3" fill="#fff"/></svg>
<div class="t" style="left:40px;top:625px;font-size:15.5px;transform:scaleX(0.9526)">ug-ngfw@sea</div>
<div class="t tm" style="left:284.3px;top:625px;transform:scaleX(0.95)">11:18:39</div>
<svg class="a" style="left:440px;top:628px" width="18" height="16" viewBox="0 0 18 16" opacity="1"><rect x="0.5" y="2.5" width="17" height="13" rx="0.8" fill="#e9eff3" stroke="#40607a" stroke-width="1"/><rect x="0" y="14.5" width="18" height="1.5" fill="#8aa0b0"/><rect x="4" y="0.5" width="1" height="2" fill="#40607a"/><rect x="7" y="0.5" width="1" height="2" fill="#40607a"/><rect x="10" y="0.5" width="1" height="2" fill="#40607a"/><rect x="13" y="0.5" width="1" height="2" fill="#40607a"/><rect x="3" y="7" width="5" height="1" fill="#40607a"/><rect x="10" y="7" width="5" height="1" fill="#40607a"/><rect x="3" y="9" width="5" height="2" fill="#8aa0b0"/><rect x="10" y="9" width="5" height="2" fill="#8aa0b0"/></svg>
<div class="t" style="left:475.7px;top:625px;transform:scaleX(0.8875)">VPN</div>
<div class="t" style="left:638px;top:625px;font-size:15.5px;transform:scaleX(0.9664)">Ошибка клиента</div>
<div class="t it" style="left:955px;top:625px;font-size:15.5px;transform:scaleX(0.9476)">Unknown</div>
<div class="t" style="left:1080px;top:625px;transform:scaleX(0.9638)">0.0.0.0</div>
<div class="t" style="left:1231px;top:625px;font-size:15.5px;transform:scaleX(0.9659)">VPN клиент</div>
<div class="row" style="top:652px;height:33px;background:#ffffff;border-bottom:1px solid #ececec"></div>
<svg class="a" style="left:4px;top:660px" width="18" height="18" viewBox="0 0 18 18"><circle cx="9" cy="9" r="9" fill="#0cb14b"/><circle cx="9.2" cy="4.4" r="1.5" fill="#fff"/><path d="M7.7 7 H10.2 L9.4 12.6 C9.3 13.2 9.8 13.3 10.6 12.7 L10.8 13.3 C9.8 14.3 8.6 14.7 7.9 14.4 C7.3 14.1 7.2 13.5 7.3 12.8 L7.9 8.7 H7.4 Z" fill="#fff"/></svg>
<div class="t" style="left:40px;top:658px;font-size:15.5px;transform:scaleX(0.9526)">ug-ngfw@sea</div>
<div class="t tm" style="left:284.3px;top:658px;transform:scaleX(0.95)">11:18:39</div>
<svg class="a" style="left:440px;top:661px" width="18" height="16" viewBox="0 0 18 16" opacity="1"><rect x="0.5" y="2.5" width="17" height="13" rx="0.8" fill="#e9eff3" stroke="#40607a" stroke-width="1"/><rect x="0" y="14.5" width="18" height="1.5" fill="#8aa0b0"/><rect x="4" y="0.5" width="1" height="2" fill="#40607a"/><rect x="7" y="0.5" width="1" height="2" fill="#40607a"/><rect x="10" y="0.5" width="1" height="2" fill="#40607a"/><rect x="13" y="0.5" width="1" height="2" fill="#40607a"/><rect x="3" y="7" width="5" height="1" fill="#40607a"/><rect x="10" y="7" width="5" height="1" fill="#40607a"/><rect x="3" y="9" width="5" height="2" fill="#8aa0b0"/><rect x="10" y="9" width="5" height="2" fill="#8aa0b0"/></svg>
<div class="t" style="left:475.7px;top:658px;transform:scaleX(0.8875)">VPN</div>
<div class="t" style="left:638px;top:658px;font-size:15.5px;transform:scaleX(0.993)">Клиент запущен</div>
<div class="t it" style="left:955px;top:658px;font-size:15.5px;transform:scaleX(0.9476)">Unknown</div>
<div class="t" style="left:1080px;top:658px;transform:scaleX(0.9638)">0.0.0.0</div>
<div class="t" style="left:1231px;top:658px;font-size:15.5px;transform:scaleX(0.9659)">VPN клиент</div>
<div class="row" style="top:685px;height:33px;background:#fafafa;border-bottom:1px solid #ececec"></div>
<svg class="a" style="left:4px;top:692px" width="18" height="18" viewBox="0 0 18 18"><circle cx="9" cy="9" r="9" fill="#0cb14b"/><circle cx="9.2" cy="4.4" r="1.5" fill="#fff"/><path d="M7.7 7 H10.2 L9.4 12.6 C9.3 13.2 9.8 13.3 10.6 12.7 L10.8 13.3 C9.8 14.3 8.6 14.7 7.9 14.4 C7.3 14.1 7.2 13.5 7.3 12.8 L7.9 8.7 H7.4 Z" fill="#fff"/></svg>
<div class="t" style="left:40px;top:690px;font-size:15.5px;transform:scaleX(0.9526)">ug-ngfw@sea</div>
<div class="t tm" style="left:284.3px;top:690px;transform:scaleX(0.95)">11:18:39</div>
<svg class="a" style="left:440px;top:693px" width="18" height="16" viewBox="0 0 18 16" opacity="1"><rect x="0.5" y="2.5" width="17" height="13" rx="0.8" fill="#e9eff3" stroke="#40607a" stroke-width="1"/><rect x="0" y="14.5" width="18" height="1.5" fill="#8aa0b0"/><rect x="4" y="0.5" width="1" height="2" fill="#40607a"/><rect x="7" y="0.5" width="1" height="2" fill="#40607a"/><rect x="10" y="0.5" width="1" height="2" fill="#40607a"/><rect x="13" y="0.5" width="1" height="2" fill="#40607a"/><rect x="3" y="7" width="5" height="1" fill="#40607a"/><rect x="10" y="7" width="5" height="1" fill="#40607a"/><rect x="3" y="9" width="5" height="2" fill="#8aa0b0"/><rect x="10" y="9" width="5" height="2" fill="#8aa0b0"/></svg>
<div class="t" style="left:475.7px;top:690px;transform:scaleX(0.8875)">VPN</div>
<div class="t" style="left:638px;top:690px;font-size:15.5px;transform:scaleX(0.9845)">Подключение клиента VPN</div>
<div class="t it" style="left:955px;top:690px;font-size:15.5px;transform:scaleX(0.9476)">Unknown</div>
<div class="t" style="left:1080px;top:690px;transform:scaleX(0.9638)">0.0.0.0</div>
<div class="t" style="left:1231px;top:690px;font-size:15.5px;transform:scaleX(0.9659)">VPN клиент</div>
<div class="row" style="top:718px;height:33px;background:#ffffff;border-bottom:1px solid #ececec"></div>
<svg class="a" style="left:4px;top:725px" width="18" height="18" viewBox="0 0 18 18"><circle cx="9" cy="9" r="9" fill="#ff6308"/><path d="M7.6 3.2 H10.4 L9.9 10.2 H8.1 Z" fill="#fff"/><circle cx="9" cy="12.9" r="1.3" fill="#fff"/></svg>
<div class="t" style="left:40px;top:723px;font-size:15.5px;transform:scaleX(0.9526)">ug-ngfw@sea</div>
<div class="t tm" style="left:284.3px;top:723px;transform:scaleX(0.95)">11:18:34</div>
<svg class="a" style="left:440px;top:726px" width="18" height="16" viewBox="0 0 18 16" opacity="1"><rect x="0.5" y="2.5" width="17" height="13" rx="0.8" fill="#e9eff3" stroke="#40607a" stroke-width="1"/><rect x="0" y="14.5" width="18" height="1.5" fill="#8aa0b0"/><rect x="4" y="0.5" width="1" height="2" fill="#40607a"/><rect x="7" y="0.5" width="1" height="2" fill="#40607a"/><rect x="10" y="0.5" width="1" height="2" fill="#40607a"/><rect x="13" y="0.5" width="1" height="2" fill="#40607a"/><rect x="3" y="7" width="5" height="1" fill="#40607a"/><rect x="10" y="7" width="5" height="1" fill="#40607a"/><rect x="3" y="9" width="5" height="2" fill="#8aa0b0"/><rect x="10" y="9" width="5" height="2" fill="#8aa0b0"/></svg>
<div class="t" style="left:475.7px;top:723px;transform:scaleX(0.8875)">VPN</div>
<div class="t" style="left:638px;top:723px;font-size:15.5px;transform:scaleX(0.9664)">Ошибка клиента</div>
<div class="t it" style="left:955px;top:723px;font-size:15.5px;transform:scaleX(0.9476)">Unknown</div>
<div class="t" style="left:1080px;top:723px;transform:scaleX(0.9638)">0.0.0.0</div>
<div class="t" style="left:1231px;top:723px;font-size:15.5px;transform:scaleX(0.9659)">VPN клиент</div>
<div class="row" style="top:751px;height:32px;background:#fafafa;border-bottom:1px solid #ececec"></div>
<svg class="a" style="left:4px;top:758px" width="18" height="18" viewBox="0 0 18 18"><circle cx="9" cy="9" r="9" fill="#0cb14b"/><circle cx="9.2" cy="4.4" r="1.5" fill="#fff"/><path d="M7.7 7 H10.2 L9.4 12.6 C9.3 13.2 9.8 13.3 10.6 12.7 L10.8 13.3 C9.8 14.3 8.6 14.7 7.9 14.4 C7.3 14.1 7.2 13.5 7.3 12.8 L7.9 8.7 H7.4 Z" fill="#fff"/></svg>
<div class="t" style="left:40px;top:756px;font-size:15.5px;transform:scaleX(0.9526)">ug-ngfw@sea</div>
<div class="t tm" style="left:284.3px;top:756px;transform:scaleX(0.95)">11:18:33</div>
<svg class="a" style="left:440px;top:759px" width="18" height="16" viewBox="0 0 18 16" opacity="1"><rect x="0.5" y="2.5" width="17" height="13" rx="0.8" fill="#e9eff3" stroke="#40607a" stroke-width="1"/><rect x="0" y="14.5" width="18" height="1.5" fill="#8aa0b0"/><rect x="4" y="0.5" width="1" height="2" fill="#40607a"/><rect x="7" y="0.5" width="1" height="2" fill="#40607a"/><rect x="10" y="0.5" width="1" height="2" fill="#40607a"/><rect x="13" y="0.5" width="1" height="2" fill="#40607a"/><rect x="3" y="7" width="5" height="1" fill="#40607a"/><rect x="10" y="7" width="5" height="1" fill="#40607a"/><rect x="3" y="9" width="5" height="2" fill="#8aa0b0"/><rect x="10" y="9" width="5" height="2" fill="#8aa0b0"/></svg>
<div class="t" style="left:475.7px;top:756px;transform:scaleX(0.8875)">VPN</div>
<div class="t" style="left:638px;top:756px;font-size:15.5px;transform:scaleX(0.993)">Клиент запущен</div>
<div class="t it" style="left:955px;top:756px;font-size:15.5px;transform:scaleX(0.9476)">Unknown</div>
<div class="t" style="left:1080px;top:756px;transform:scaleX(0.9638)">0.0.0.0</div>
<div class="t" style="left:1231px;top:756px;font-size:15.5px;transform:scaleX(0.9659)">VPN клиент</div>
</body></html>
